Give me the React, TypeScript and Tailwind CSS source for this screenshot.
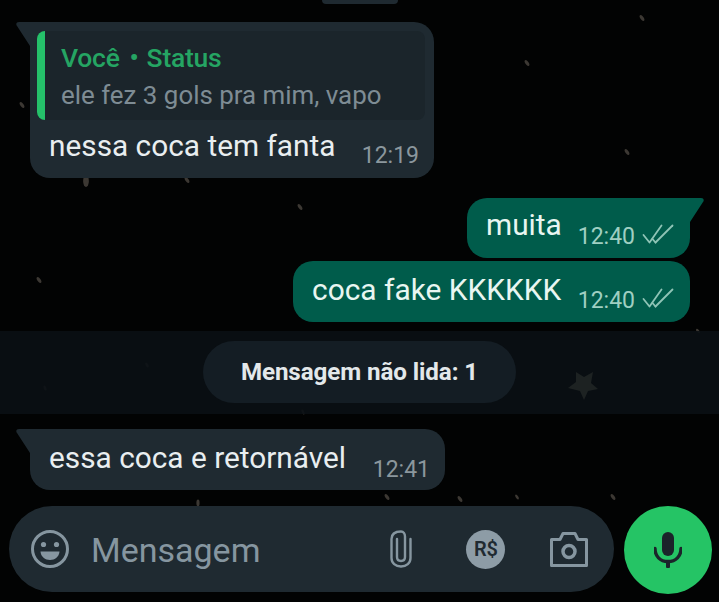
import React from "react";

const font = { fontFamily: "Roboto, sans-serif" };

function TailLeft({ color }: { color: string }) {
  return (
    <svg className="absolute left-[-14px] top-0" width="20" height="30" viewBox="0 0 20 30">
      <path d="M20 0H3C0.5 0 -0.5 2 1 4L14 24V30H20Z" fill={color} />
    </svg>
  );
}

function TailRight({ color }: { color: string }) {
  return (
    <svg className="absolute right-[-14px] top-0" width="20" height="30" viewBox="0 0 20 30">
      <path d="M0 0H17C19.5 0 20.5 2 19 4L6 24V30H0Z" fill={color} />
    </svg>
  );
}

function Ticks() {
  return (
    <svg width="32" height="20" viewBox="0 0 32 20" fill="none" stroke="#8fc4b6" strokeWidth="1.8" strokeLinecap="round" strokeLinejoin="round">
      <path d="M1.5 11L7.5 18.5L19.5 1.5" />
      <path d="M13.5 18.5L30.5 1.5" />
      <path d="M10.5 15L13.5 18.5" />
    </svg>
  );
}

function Doodles() {
  const marks: [number, number, number, number][] = [
    [22, 105, -35, 1], [86, 181, 0, 1.8], [187, 180, -35, 1], [300, 207, -35, 1], [527, 63, -35, 1],
    [642, 18, -35, 1], [627, 152, -35, 1], [39, 280, -35, 1], [147, 365, -30, 0.8], [45, 388, -20, 0.8],
    [303, 412, -25, 0.8], [387, 497, -35, 1], [517, 497, -35, 0.8], [460, 499, -35, 1], [613, 497, -35, 1],
    [698, 331, -40, 0.8], [198, 503, 0, 1],
  ];
  return (
    <svg className="absolute inset-0" width="719" height="602" viewBox="0 0 719 602">
      {marks.map(([x, y, r, s], i) => (
        <ellipse key={i} cx={x} cy={y} rx={1.6 * s} ry={3.4 * s} fill="#3c3833" transform={`rotate(${r} ${x} ${y})`} />
      ))}
    </svg>
  );
}

export default function App() {
  return (
    <div style={font} className="relative w-[719px] h-[602px] overflow-hidden bg-[#020303] flex flex-col">
      <Doodles />
      <div className="relative ml-[322px] w-[76px] h-[4px] rounded-b-[8px] bg-[#1f2a31]" />

      <div className="relative ml-[30px] mt-[18px] w-[404px] h-[156px] rounded-[20px] rounded-tl-none bg-[#1f2a31] pt-[9px] pl-[7px] pr-[9px]">
        <TailLeft color="#1f2a31" />
        <div className="relative h-[89px] rounded-[8px] bg-[#1b252b] flex flex-col pl-[24px] pt-[11px]">
          <div className="absolute left-0 top-0 bottom-0 w-[8px] rounded-l-[8px] bg-[#25c16a]" />
          <div className="flex items-center text-[26.5px] leading-[32px] font-medium text-[#25a563] tracking-[-0.25px]">
            <span>Você</span>
            <span className="ml-[10px]">•</span>
            <span className="ml-[8px]">Status</span>
          </div>
          <div className="mt-[5px] text-[25.9px] leading-[32px] text-[#7e8c94]">ele fez 3 gols pra mim, vapo</div>
        </div>
        <div className="flex items-start justify-between pl-[12px] pr-[6px] mt-[9px]">
          <span className="text-[29.8px] leading-[34px] text-[#e9eef0]">nessa coca tem fanta</span>
          <span className="mt-[14px] text-[23px] leading-[26px] text-[#8b979d]">12:19</span>
        </div>
      </div>

      <div className="relative self-end mr-[29px] mt-[20px] w-[223px] h-[60px] rounded-[20px] rounded-tr-none bg-[#005c4b] flex items-start pl-[19px] pr-[16px]">
        <TailRight color="#005c4b" />
        <span className="mt-[10px] text-[29.8px] leading-[34px] text-[#e8f6f1]">muita</span>
        <span className="ml-auto mt-[25px] text-[23px] leading-[27px] text-[#9fcfc2]">12:40</span>
        <span className="ml-[7px] mt-[26px]"><Ticks /></span>
      </div>

      <div className="relative self-end mr-[29px] mt-[3px] w-[397px] h-[61px] rounded-[20px] bg-[#005c4b] flex items-start pl-[19px] pr-[16px]">
        <span className="mt-[12px] text-[29.9px] leading-[34px] text-[#e8f6f1]">coca fake KKKKKK</span>
        <span className="ml-auto mt-[26px] text-[23px] leading-[27px] text-[#9fcfc2]">12:40</span>
        <span className="ml-[7px] mt-[27px]"><Ticks /></span>
      </div>

      <div className="relative mt-[9px] h-[83px] bg-[#0a1014]/90 flex items-center justify-center">
        <svg className="absolute left-[567px] top-[39px]" width="32" height="32" viewBox="0 0 32 32">
          <path d="M9 2L17 7L26 2L24 13L31 19L21 21L17 30L13 21L1 18L9 12Z" fill="#1d2222" />
        </svg>
        <div className="relative -mt-[1px] w-[313px] h-[62px] rounded-full bg-[#141d24] flex items-center justify-center">
          <span className="text-[24.2px] font-bold text-[#e3e8ea] tracking-[-0.1px]">Mensagem não lida: 1</span>
        </div>
      </div>

      <div className="relative ml-[30px] mt-[15px] w-[415px] h-[61px] rounded-[20px] rounded-tl-none bg-[#1f2a31] flex items-start pl-[19px]">
        <TailLeft color="#1f2a31" />
        <span className="mt-[12px] text-[29.8px] leading-[34px] text-[#e9eef0]">essa coca e retornável</span>
        <span className="ml-auto mr-[15px] mt-[27px] text-[23px] leading-[27px] text-[#8b979d]">12:41</span>
      </div>

      <div className="relative mt-[16px] flex items-start pl-[9px]">
        <div className="w-[605px] h-[86px] rounded-full bg-[#1f2a31] flex items-center pl-[22px]">
          <svg width="38" height="38" viewBox="0 0 38 38" fill="none">
            <circle cx="19" cy="19" r="17.5" stroke="#8696a0" strokeWidth="3" />
            <circle cx="12.5" cy="14.5" r="2.6" fill="#8696a0" />
            <circle cx="25.5" cy="14.5" r="2.6" fill="#8696a0" />
            <path d="M9.5 21.5H28.5C28 27 24 30 19 30C14 30 10 27 9.5 21.5Z" fill="#8696a0" />
          </svg>
          <span className="ml-[22px] mt-[3px] text-[34px] text-[#8696a0]">Mensagem</span>
          <svg className="ml-[130px]" width="22" height="38" viewBox="0 0 22 38" fill="none" stroke="#8696a0" strokeWidth="2.4" strokeLinecap="round">
            <path d="M7 9V27C7 29.5 8.5 31 11 31C13.5 31 15 29.5 15 27V6.5C15 3.5 13.5 1.5 11 1.5C6 1.5 1.5 3.5 1.5 9V28C1.5 33 5.5 36.5 11 36.5C16.5 36.5 20.5 33 20.5 28V9" />
          </svg>
          <div className="ml-[54px] w-[39px] h-[39px] rounded-full bg-[#8d9ca6] flex items-center justify-center text-[20px] font-semibold text-[#1f2a31]">R$</div>
          <svg className="ml-[45px]" width="38" height="35" viewBox="0 0 38 35" fill="none" stroke="#8696a0" strokeWidth="3" strokeLinejoin="round">
            <path d="M1.5 7.5H10L13 1.5H25L28 7.5H36.5V33.5H1.5Z" />
            <circle cx="19" cy="19.5" r="6" strokeWidth="3.5" />
          </svg>
        </div>
        <div className="ml-[10px] w-[88px] h-[88px] rounded-full bg-[#25c465] flex items-center justify-center">
          <svg width="28" height="36" viewBox="0 0 28 36" fill="#1b242a">
            <rect x="8" y="0" width="12" height="24" rx="6" />
            <path d="M1 16.5C1 24 6 29.5 14 29.5C22 29.5 27 24 27 16.5" fill="none" stroke="#1b242a" strokeWidth="3.4" strokeLinecap="round" />
            <rect x="12" y="28" width="4" height="8" rx="1" />
          </svg>
        </div>
      </div>
    </div>
  );
}
